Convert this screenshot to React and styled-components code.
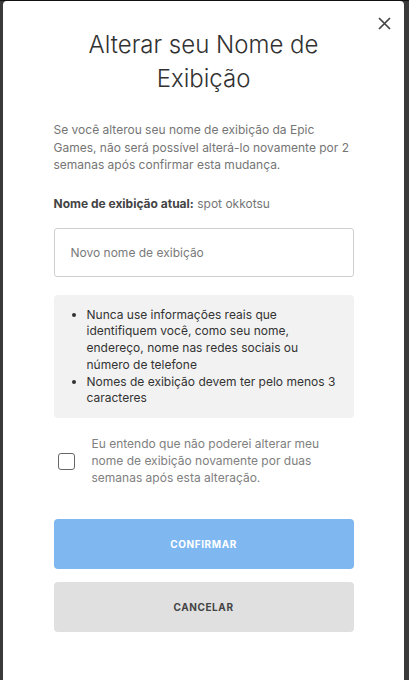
import React, { useState } from "react";
import styled, { createGlobalStyle } from "styled-components";

const Global = createGlobalStyle`
  html, body { margin: 0; padding: 0; background: #3a3a3a; }
  body { font-family: Inter, "Noto Sans", sans-serif; -webkit-font-smoothing: antialiased; }
  * { box-sizing: border-box; }
`;

const Backdrop = styled.div`
  height: 680px;
  overflow: hidden;
  border-top: 1px solid #111;
  padding: 0 5px 0 3px;
`;

const Modal = styled.div`
  position: relative;
  background: #fff;
  border-radius: 4px 4px 0 0;
  height: 700px;
  padding: 27px 0 0;
  display: flex;
  flex-direction: column;
  align-items: center;
`;

const Close = styled.button`
  position: absolute;
  top: 10px;
  right: 8px;
  width: 24px;
  height: 24px;
  padding: 0;
  border: 0;
  background: none;
  display: flex;
  align-items: center;
  justify-content: center;
  cursor: pointer;
`;

const Content = styled.div`
  width: 300px;
  display: flex;
  flex-direction: column;
`;

const Title = styled.h1`
  margin: 0 auto;
  width: 260px;
  font-size: 24px;
  font-weight: 300;
  line-height: 34px;
  color: #313131;
  text-align: center;
`;

const Desc = styled.p`
  margin: 25px 0 0;
  font-size: 12px;
  line-height: 17.5px;
  color: #757575;
`;

const Current = styled.p`
  margin: 21px 0 0;
  font-size: 12px;
  line-height: 17px;
  color: #757575;
  b { font-weight: 700; color: #444; }
`;

const Input = styled.input`
  margin-top: 16px;
  height: 49px;
  width: 100%;
  border: 1px solid #cfcfcf;
  border-radius: 3px;
  padding: 0 16px;
  font-family: inherit;
  font-size: 12px;
  color: #333;
  outline: none;
  &::placeholder { color: #7a7a7a; }
`;

const Info = styled.ul`
  margin: 18px 0 0;
  background: #f2f2f2;
  border-radius: 4px;
  padding: 12px 10px 11px 33px;
  font-size: 12px;
  line-height: 16.8px;
  color: #333;
`;

const CheckRow = styled.label`
  margin-top: 18px;
  display: flex;
  align-items: center;
  gap: 17px;
  padding-left: 4px;
  cursor: pointer;
`;

const Box = styled.span`
  flex: none;
  width: 17px;
  height: 17px;
  border: 1.5px solid #666;
  border-radius: 3px;
  background: ${(p) => (p.$on ? "#0078f2" : "#fff")};
`;

const CheckText = styled.span`
  font-size: 12px;
  line-height: 16.8px;
  color: #808080;
  width: 250px;
`;

const Button = styled.button`
  height: 50px;
  width: 100%;
  border: 0;
  border-radius: 4px;
  margin-top: ${(p) => p.$mt}px;
  background: ${(p) => p.$bg};
  color: ${(p) => p.$fg};
  font-family: inherit;
  font-size: 10px;
  font-weight: 700;
  letter-spacing: 0.6px;
  cursor: pointer;
`;

export default function App() {
  const [on, setOn] = useState(false);
  return (
    <>
      <Global />
      <Backdrop>
        <Modal>
          <Close aria-label="Fechar">
            <svg width="13" height="13" viewBox="0 0 13 13">
              <path d="M1 1L12 12M12 1L1 12" stroke="#444" strokeWidth="1.7" fill="none" />
            </svg>
          </Close>
          <Content>
            <Title>Alterar seu Nome de Exibição</Title>
            <Desc>
              Se você alterou seu nome de exibição da Epic Games, não será possível alterá-lo novamente por 2 semanas após confirmar esta mudança.
            </Desc>
            <Current>
              <b>Nome de exibição atual:</b> spot okkotsu
            </Current>
            <Input placeholder="Novo nome de exibição" />
            <Info>
              <li>Nunca use informações reais que identifiquem você, como seu nome, endereço, nome nas redes sociais ou número de telefone</li>
              <li>Nomes de exibição devem ter pelo menos 3 caracteres</li>
            </Info>
            <CheckRow onClick={() => setOn(!on)}>
              <Box $on={on} />
              <CheckText>
                Eu entendo que não poderei alterar meu nome de exibição novamente por duas semanas após esta alteração.
              </CheckText>
            </CheckRow>
            <Button $mt={32} $bg="#7fb8f1" $fg="#fff">CONFIRMAR</Button>
            <Button $mt={13} $bg="#e0e0e0" $fg="#444">CANCELAR</Button>
          </Content>
        </Modal>
      </Backdrop>
    </>
  );
}
